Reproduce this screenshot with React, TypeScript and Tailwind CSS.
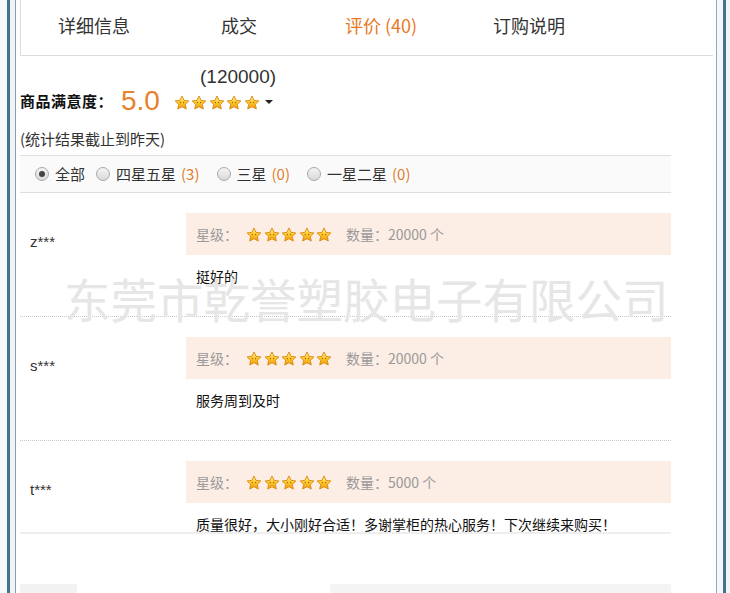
import { ChevronDown } from 'lucide-react';

const TABS = [
  { label: '详细信息', active: false, w: 'w-[163px]' },
  { label: '成交', active: false, w: 'w-[124px]' },
  { label: '评价 (40)', active: true, w: 'w-[148px]' },
  { label: '订购说明', active: false, w: 'w-[100px]' },
];

const FILTERS = [
  { label: '全部', count: null, checked: true },
  { label: '四星五星', count: 3, checked: false },
  { label: '三星', count: 0, checked: false },
  { label: '一星二星', count: 0, checked: false },
];

const REVIEWS = [
  { user: 'z***', qty: '20000 个', text: '挺好的' },
  { user: 's***', qty: '20000 个', text: '服务周到及时' },
  { user: 't***', qty: '5000 个', text: '质量很好，大小刚好合适！多谢掌柜的热心服务！下次继续来购买！' },
];

const cjk = 'font-["Noto_Sans_CJK_SC","Noto_Sans",sans-serif]';

function Star() {
  return (
    <svg width="16" height="15" viewBox="0 0 24 22" className="shrink-0">
      <defs>
        <linearGradient id="gold" x1="0" y1="0" x2="0" y2="1">
          <stop offset="0" stopColor="#fff3a0" />
          <stop offset="0.5" stopColor="#ffc928" />
          <stop offset="1" stopColor="#e99710" />
        </linearGradient>
      </defs>
      <path
        d="M12 1.2l3.1 6.6 7.2.9-5.3 5 1.4 7.1L12 17.3l-6.4 3.5 1.4-7.1-5.3-5 7.2-.9z"
        fill="url(#gold)"
        stroke="#d98a12"
        strokeWidth="1.4"
        strokeLinejoin="round"
      />
      <circle cx="9.6" cy="11" r="1" fill="#a55d08" />
      <circle cx="14.4" cy="11" r="1" fill="#a55d08" />
    </svg>
  );
}

function Stars() {
  return (
    <div className="flex gap-[1.5px]">
      {[0, 1, 2, 3, 4].map((i) => (
        <Star key={i} />
      ))}
    </div>
  );
}

function Radio({ checked }: { checked: boolean }) {
  return (
    <span className="flex h-[14px] w-[14px] items-center justify-center rounded-full border border-[#a9a9a9] bg-gradient-to-b from-[#f4f4f4] to-[#d9d9d9]">
      {checked && <span className="h-[6px] w-[6px] rounded-full bg-[#444]" />}
    </span>
  );
}

export default function App() {
  return (
    <div className={`relative flex h-[593px] w-[730px] overflow-hidden bg-white ${cjk}`}>
      {/* window chrome, left */}
      <div className="w-[7px] bg-[#f7fafb]" />
      <div className="w-[3px] bg-[#45738b]" />
      <div className="w-[5px] bg-[#eef5f8]" />
      <div className="w-[1px] bg-[#8f9da5]" />

      <div className="flex w-[700px] flex-col pl-[4px]">
        {/* tabs */}
        <div className="flex h-[56px] w-[693px] shrink-0 items-center border-b border-l border-[#dcdcdc] pb-[4px] pl-[37px]">
          {TABS.map((t) => (
            <div
              key={t.label}
              className={`${t.w} text-[18px] ${t.active ? 'text-[#e8791f]' : 'text-[#333]'}`}
            >
              {t.label}
            </div>
          ))}
        </div>

        <div className="w-[651px]">
          {/* satisfaction summary */}
          <div className="mt-[11px] pl-[180px] font-['Liberation_Sans',sans-serif] text-[19px] leading-[20px] text-[#333]">
            (120000)
          </div>
          <div className="flex h-[28px] items-center">
            <span className="text-[15px] font-bold tracking-[0.5px] text-[#111]">商品满意度：</span>
            <span className="ml-[8px] font-['Liberation_Sans',sans-serif] text-[28px] leading-[28px] text-[#e8812c]">5.0</span>
            <div className="ml-[14px] mt-[2px] flex items-center">
              <Stars />
              <ChevronDown size={16} strokeWidth={0} fill="#222" className="ml-[1px]" />
            </div>
          </div>
          <div className="mt-[14px] text-[15px] leading-[20px] text-[#333]">(统计结果截止到昨天)</div>

          {/* filter bar */}
          <div className="mt-[6px] flex h-[38px] items-center border-y border-[#dedede] bg-[#fafafa] pl-[15px] text-[15px] text-[#333]">
            {FILTERS.map((f) => (
              <label key={f.label} className={`flex items-center ${f.count === null ? 'mr-[11px]' : 'mr-[17px]'}`}>
                <Radio checked={f.checked} />
                <span className="ml-[6px]">{f.label}</span>
                {f.count !== null && <span className="ml-[5px] text-[#e07d2f]">({f.count})</span>}
              </label>
            ))}
          </div>

          {/* reviews */}
          {REVIEWS.map((r, i) => (
            <div
              key={r.user}
              className={`flex ${i < 2 ? 'h-[124px] border-b border-dotted border-[#c8c8c8]' : 'h-[93px] border-b-2 border-[#eeeeee]'}`}
            >
              <div className="w-[166px] pl-[10px] pt-[41px] font-['Liberation_Sans',sans-serif] text-[15px] leading-[16px] text-[#333]">
                {r.user}
              </div>
              <div className="flex-1 pt-[20px]">
                <div className="flex h-[42px] items-center bg-[#fdeee5] pl-[10px] text-[14px] text-[#999]">
                  <span>星级：</span>
                  <span className="ml-[8px]">
                    <Stars />
                  </span>
                  <span className="ml-[14px]">数量：{r.qty}</span>
                </div>
                <div className="mt-[11px] pl-[10px] text-[14px] leading-[20px] text-[#111]">{r.text}</div>
              </div>
            </div>
          ))}

          {/* lower page, faded */}
          <div className="mt-[50px] flex h-[12px] gap-[253px]">
            <div className="w-[57px] bg-[#f2f2f2]" />
            <div className="flex-1 bg-[#f4f4f4]" />
          </div>
        </div>
      </div>

      {/* window chrome, right */}
      <div className="w-[1px] bg-[#9aa6ad]" />
      <div className="w-[6px] bg-[#f4f8fa]" />
      <div className="w-[3px] bg-[#45738b]" />
      <div className="flex-1 bg-[#eef5f8]" />

      {/* company watermark */}
      <div className="pointer-events-none absolute left-[64px] top-[274px] whitespace-nowrap text-[46.5px] leading-[48px] text-[#e6e6e6]">
        东莞市乾誉塑胶电子有限公司
      </div>
    </div>
  );
}
